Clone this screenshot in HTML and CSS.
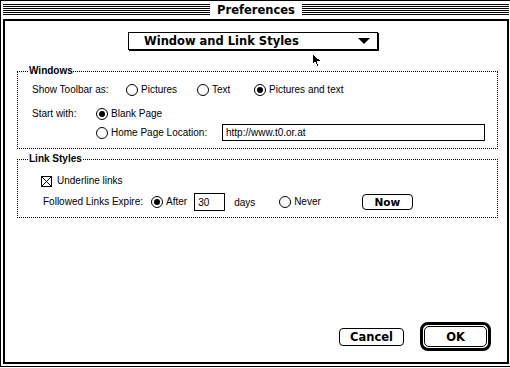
FILE: index.html
```html
<html>

<head>
    <meta charset="UTF-8">
    <link rel="stylesheet" href="styles.css">
</head>

<body>
    <div class="window">
        <div class="titlebar"><span class="title">Preferences</span></div>
        <div class="content">
            <div class="popup">
                <span>Window and Link Styles</span>
                <span class="arrow"></span>
            </div>

            <fieldset class="group windows">
                <legend>Windows</legend>
                <div class="group-body">
                    <div class="row toolbar">
                        <span class="label">Show Toolbar as:</span>
                        <label class="opt w71"><span class="radio"></span>Pictures</label>
                        <label class="opt w57"><span class="radio"></span>Text</label>
                        <label class="opt"><span class="radio on"></span>Pictures and text</label>
                    </div>
                    <div class="start">
                        <span class="label">Start with:</span>
                        <label class="opt"><span class="radio on"></span>Blank Page</label>
                        <span></span>
                        <div class="row home">
                            <label class="opt w126"><span class="radio"></span>Home Page Location:</label>
                            <input class="field url" value="http://www.t0.or.at">
                        </div>
                    </div>
                </div>
            </fieldset>

            <fieldset class="group links">
                <legend>Link Styles</legend>
                <div class="group-body">
                    <label class="opt check-row"><span class="check"><svg width="11" height="11" viewBox="0 0 11 11"><path d="M1 1L10 10M10 1L1 10" stroke="black" stroke-width="1" shape-rendering="crispEdges"/></svg></span>Underline links</label>
                    <div class="row expire">
                        <span class="label">Followed Links Expire:</span>
                        <label class="opt"><span class="radio on"></span>After</label>
                        <input class="field days" value="30">
                        <span class="unit">days</span>
                        <label class="opt"><span class="radio"></span>Never</label>
                        <button class="btn now">Now</button>
                    </div>
                </div>
            </fieldset>

            <div class="footer">
                <button class="btn cancel">Cancel</button>
                <div class="default-ring"><button class="btn ok">OK</button></div>
            </div>
        </div>
        <svg class="cursor" width="12" height="17" viewBox="0 0 12 17">
            <polygon points="1,1 1,13 4,10 6,15 8,14 6,9 10,9" fill="black" stroke="white" stroke-width="1" shape-rendering="crispEdges"/>
        </svg>
    </div>
</body>

</html>
```

FILE: styles.css
```css
* {
    margin: 0;
    padding: 0;
    box-sizing: border-box;
}

html,
body {
    overflow: hidden;
    background: white;
}

body {
    font-family: "Liberation Sans", Arial, sans-serif;
    font-size: 10px;
    color: black;
}

.window {
    position: relative;
    width: 512px;
    height: 367px;
    border: 1px solid black;
    display: flex;
    flex-direction: column;
}

.titlebar {
    height: 18px;
    display: flex;
    justify-content: center;
    background: repeating-linear-gradient(to bottom, black 0 1px, white 1px 2px);
    background-size: calc(100% - 4px) 11px;
    background-position: 2px 3px;
    background-repeat: no-repeat;
}

.title {
    background: white;
    padding: 0 7px;
    font-family: "DejaVu Sans", sans-serif;
    font-weight: bold;
    font-size: 11.5px;
    line-height: 18px;
}

.content {
    flex: 1;
    margin: 0 2px 2px 2px;
    border: 2px solid black;
    display: flex;
    flex-direction: column;
}

.popup {
    margin: 11px 0 0 123px;
    width: 250px;
    height: 18px;
    border: 1px solid black;
    box-shadow: 1px 1px 0 black;
    display: flex;
    align-items: center;
    justify-content: space-between;
    padding: 0 7px 0 15px;
    font-family: "DejaVu Sans", sans-serif;
    font-weight: bold;
    font-size: 11.5px;
}

.arrow {
    width: 0;
    height: 0;
    border-left: 6px solid transparent;
    border-right: 6px solid transparent;
    border-top: 6px solid black;
}

.group {
    margin: 0 9px 0 12px;
    border: 1px dotted black;
    min-width: 0;
    padding: 0;
}

.group legend {
    margin-left: 11px;
    padding: 0;
    font-weight: bold;
    font-size: 10px;
    line-height: 12px;
}

.windows {
    margin-top: 15px;
}

.windows .group-body {
    padding: 6px 0 7px 14px;
}

.links {
    margin-top: 4px;
}

.links .group-body {
    padding: 9px 0 6px 23px;
}

.row {
    display: flex;
    align-items: center;
}

.label {
    line-height: 14px;
}

.opt {
    display: flex;
    align-items: center;
    gap: 3px;
    line-height: 14px;
}

.w71 { width: 71px; }
.w57 { width: 57px; }
.w126 { width: 126px; }

.toolbar {
    height: 14px;
}

.toolbar .label {
    width: 94px;
}

.start {
    display: grid;
    grid-template-columns: 64px 1fr;
    row-gap: 3px;
    margin-top: 10px;
}

.home {
    height: 17px;
}

.radio {
    width: 12px;
    height: 12px;
    border: 1px solid black;
    border-radius: 50%;
    display: flex;
    align-items: center;
    justify-content: center;
    flex: none;
}

.radio.on::after {
    content: "";
    width: 6px;
    height: 6px;
    border-radius: 50%;
    background: black;
}

.check {
    width: 11px;
    height: 11px;
    display: block;
    flex: none;
}

.check svg {
    display: block;
    outline: 1px solid black;
    outline-offset: -1px;
}

.check-row {
    gap: 5px;
    height: 14px;
}

.field {
    border: 1px solid black;
    font-family: "Liberation Sans", Arial, sans-serif;
    font-size: 10px;
    padding: 0 3px;
    outline: none;
    background: white;
}

.url {
    width: 263px;
    height: 17px;
}

.expire {
    margin-left: 2px;
    margin-top: 5px;
    height: 18px;
}

.expire .label {
    width: 108px;
}

.days {
    width: 31px;
    height: 18px;
    margin-left: 7px;
}

.unit {
    margin-left: 9px;
    width: 45px;
}

.btn {
    font-family: "DejaVu Sans", sans-serif;
    font-weight: bold;
    font-size: 11.5px;
    background: white;
    border: 1px solid black;
    border-radius: 4px;
    color: black;
}

.now {
    width: 51px;
    height: 16px;
    margin-left: 41px;
    font-size: 10.5px;
    line-height: 14px;
}

.footer {
    margin-top: auto;
    margin-bottom: 11px;
    margin-right: 16px;
    display: flex;
    justify-content: flex-end;
    align-items: center;
    gap: 16px;
}

.cancel {
    width: 65px;
    height: 18px;
}

.default-ring {
    border: 3px solid black;
    border-radius: 8px;
    padding: 1px;
    width: 71px;
    height: 29px;
}

.ok {
    width: 100%;
    height: 100%;
    border-radius: 5px;
}

.cursor {
    position: absolute;
    left: 310px;
    top: 51px;
}
```
